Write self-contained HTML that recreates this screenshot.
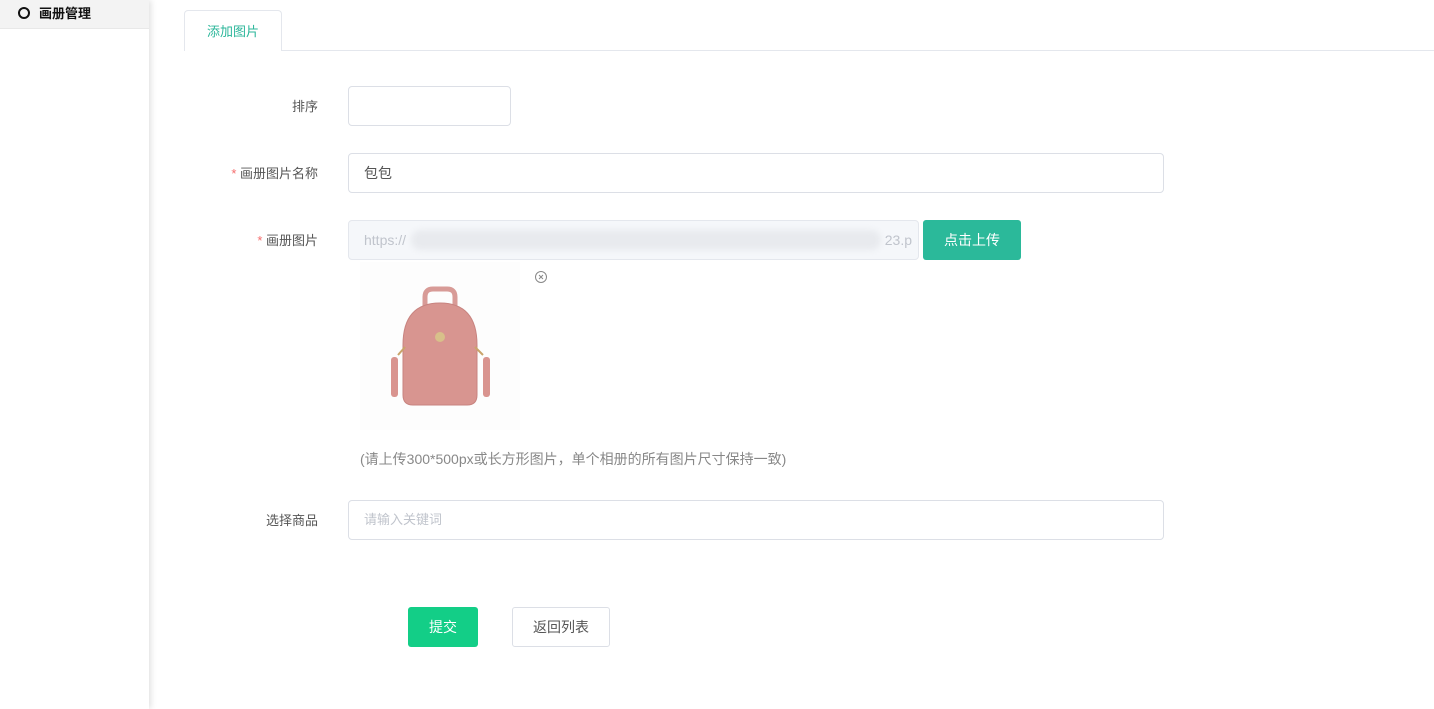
<!DOCTYPE html>
<html><head><meta charset="utf-8"><style>
*{box-sizing:border-box;margin:0;padding:0}
body{width:1434px;height:709px;overflow:hidden;background:#fff;font-family:"Liberation Sans","Noto Sans CJK SC",sans-serif;font-size:14px;color:#333;position:relative}
.side{position:absolute;left:0;top:0;width:149px;height:709px;background:#fff;box-shadow:2px 0 6px rgba(0,0,0,.12)}
.side .it{height:29px;background:#f3f3f3;border-bottom:1px solid #e8e8e8;display:flex;align-items:center;padding-left:18px;padding-bottom:3px;font-weight:bold;font-size:13px;color:#111}
.side .it i{width:12px;height:12px;border:2px solid #111;border-radius:50%;margin-right:9px}
.tabline{position:absolute;left:184px;top:50px;right:0;border-top:1px solid #e4e7ed}
.tab{position:absolute;left:184px;top:10px;width:98px;height:41px;border:1px solid #e4e7ed;border-bottom:none;border-radius:4px 4px 0 0;background:#fff;color:#2bb69a;font-size:13px;text-align:center;line-height:42px}
.lbl{position:absolute;right:1116px;font-size:13px;color:#555;text-align:right}
.lbl b{color:#f56c6c;font-weight:normal}
.inp{position:absolute;height:40px;border:1px solid #dcdfe6;border-radius:4px;background:#fff;font-size:14px;padding-left:15px;line-height:38px;color:#555}
.btn{position:absolute;border-radius:3px;font-size:14px;text-align:center;line-height:40px}
</style></head><body>
<div class="side"><div class="it"><i></i>画册管理</div></div>
<div class="tabline"></div>
<div class="tab">添加图片</div>

<div class="lbl" style="top:96px">排序</div>
<div class="inp" style="left:348px;top:86px;width:163px"></div>

<div class="lbl" style="top:163px"><b>* </b>画册图片名称</div>
<div class="inp" style="left:348px;top:153px;width:816px">包包</div>

<div class="lbl" style="top:230px"><b>* </b>画册图片</div>
<div class="inp" style="left:348px;top:220px;width:571px;background:#f5f7fa;border-color:#e4e7ed;color:#c0c4cc;overflow:hidden">https://<span style="position:absolute;left:62px;top:9px;width:470px;height:20px;background:#e8eaee;border-radius:10px;filter:blur(3px)"></span><span style="position:absolute;right:6px;top:0">23.p</span></div>
<div class="btn" style="left:923px;top:220px;width:98px;height:40px;background:#2bb99a;color:#fff">点击上传</div>

<div style="position:absolute;left:360px;top:262px;width:160px;height:168px;background:#fdfdfd"></div>
<svg style="position:absolute;left:385px;top:285px" width="110" height="125" viewBox="0 0 110 125">
<path d="M40 25 V12 Q40 4 48 4 H62 Q70 4 70 12 V25" fill="none" stroke="#d89b97" stroke-width="5"/>
<path d="M18 60 Q18 18 55 18 Q92 18 92 60 V110 Q92 120 82 120 H28 Q18 120 18 110Z" fill="#d89590" stroke="#c88480"/>
<rect x="6" y="72" width="7" height="40" rx="3" fill="#d9948f"/>
<rect x="98" y="72" width="7" height="40" rx="3" fill="#d9948f"/>
<path d="M13 70 L20 62 M98 70 L90 62" stroke="#c9a46a" stroke-width="2"/>
<circle cx="55" cy="52" r="5" fill="#d8c08a"/>
</svg>
<svg style="position:absolute;left:534px;top:270px" width="14" height="14" viewBox="0 0 14 14"><circle cx="7" cy="7" r="5.5" fill="none" stroke="#888" stroke-width="1"/><path d="M5 5L9 9M9 5L5 9" stroke="#888" stroke-width="1"/></svg>
<div style="position:absolute;left:360px;top:449px;font-size:14px;color:#888">(请上传300*500px或长方形图片，单个相册的所有图片尺寸保持一致)</div>

<div class="lbl" style="top:510px">选择商品</div>
<div class="inp" style="left:348px;top:500px;width:816px;color:#c0c4cc;font-size:13px">请输入关键词</div>

<div class="btn" style="left:408px;top:607px;width:70px;height:40px;background:#13ce87;color:#fff">提交</div>
<div class="btn" style="left:512px;top:607px;width:98px;height:40px;border:1px solid #dcdfe6;color:#555;line-height:38px">返回列表</div>
</body></html>
